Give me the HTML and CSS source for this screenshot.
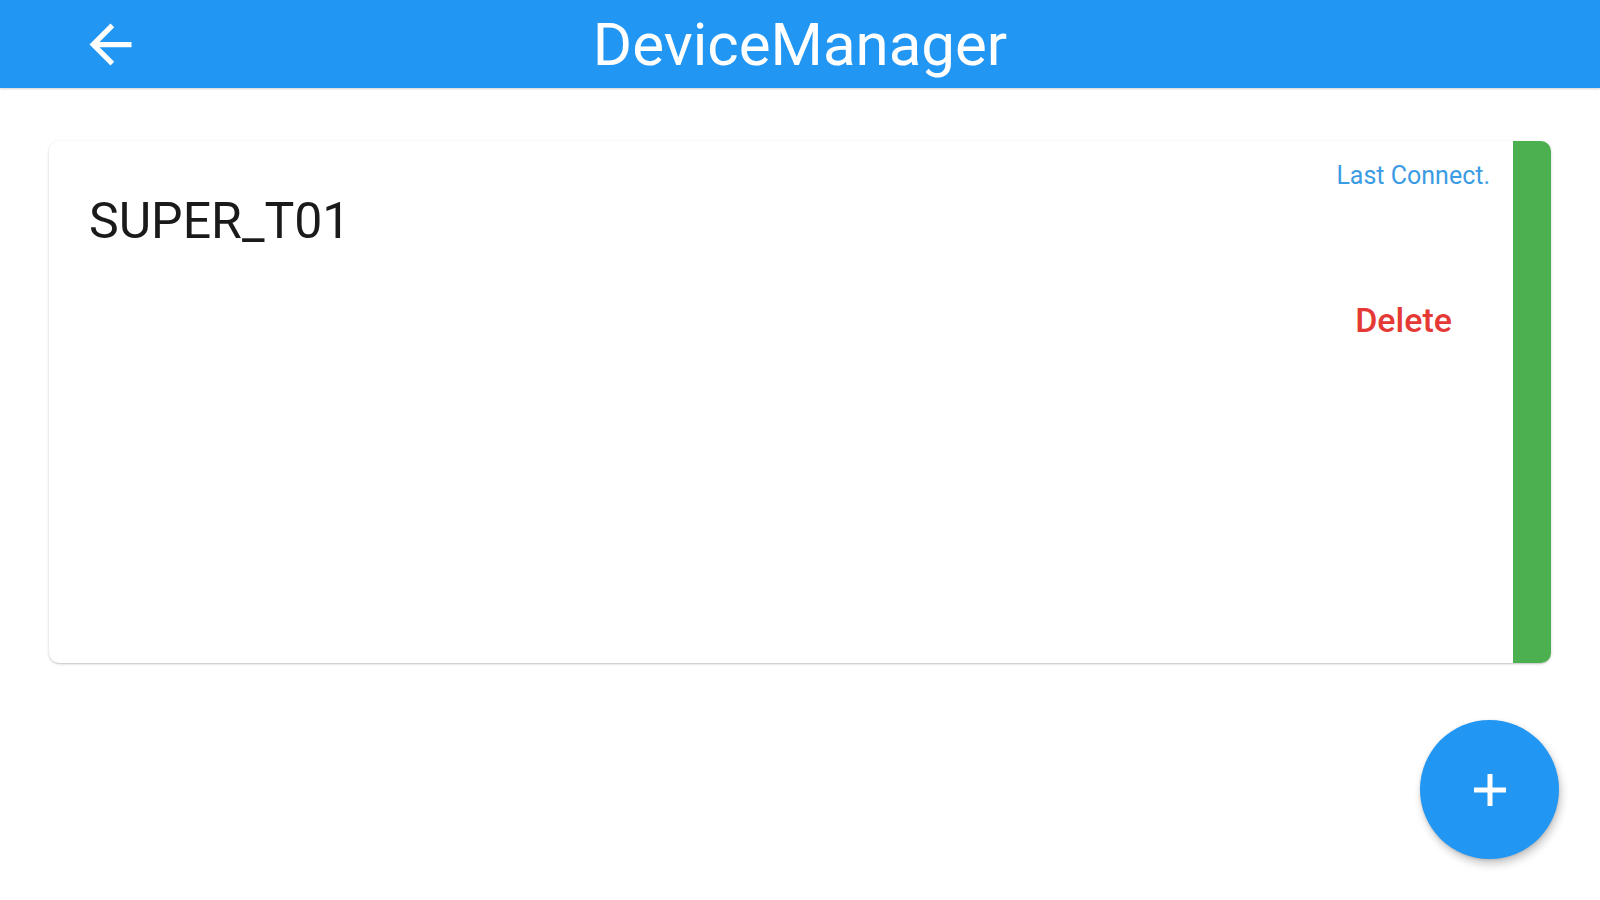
FILE: index.html
```html
<!DOCTYPE html>
<html>
<head>
<meta charset="utf-8">
<title>DeviceManager</title>
<link rel="stylesheet" href="styles.css">
</head>
<body>
<header class="appbar">
  <button class="back-btn" aria-label="Back">
    <svg class="back-icon" viewBox="0 0 24 24"><path d="M20 11H7.83l5.59-5.59L12 4l-8 8 8 8 1.41-1.41L7.83 13H20v-2z" fill="#fff"/></svg>
  </button>
  <h1 class="title">DeviceManager</h1>
</header>
<main class="content">
  <section class="card">
    <div class="card-main">
      <div class="device-name">SUPER_T01</div>
    </div>
    <div class="card-side">
      <div class="last-connect">Last Connect.</div>
      <div class="delete">Delete</div>
    </div>
    <div class="status-bar"></div>
  </section>
</main>
<button class="fab" aria-label="Add">
  <svg class="fab-icon" viewBox="0 0 36 36"><path d="M18 2v32M2 18h32" stroke="#fff" stroke-width="5"/></svg>
</button>
</body>
</html>
```
FILE: styles.css
```css
* { box-sizing: border-box; }
html, body { margin: 0; padding: 0; }
body {
  width: 1600px;
  height: 900px;
  background: #ffffff;
  font-family: Roboto, "Noto Sans", "Liberation Sans", sans-serif;
  overflow: hidden;
  position: relative;
}
.appbar {
  height: 88px;
  background: #2196F3;
  position: relative;
  display: flex;
  align-items: center;
  justify-content: center;
  box-shadow: 0 1px 2px rgba(0,0,0,0.18);
}
.back-btn {
  position: absolute;
  left: 79px;
  top: 13px;
  width: 63px;
  height: 63px;
  padding: 0;
  border: 0;
  background: transparent;
}
.back-icon { width: 63px; height: 63px; display: block; }
.title {
  margin: 0;
  color: #ffffff;
  font-size: 60px;
  font-weight: 400;
  line-height: 1;
  padding-top: 1px;
}
.content {
  padding: 53px 49px 0 49px;
}
.card {
  height: 522px;
  display: flex;
  background: #fff;
  border-radius: 10px;
  box-shadow: 0 1px 3px rgba(0,0,0,0.18), 0 1px 1px rgba(0,0,0,0.08);
}
.card-main {
  flex: 1;
  padding: 55px 0 0 40px;
}
.device-name {
  font-size: 50px;
  line-height: 1;
  color: #1a1a1a;
}
.card-side {
  display: flex;
  flex-direction: column;
  align-items: flex-end;
  padding: 22px 23px 0 0;
}
.last-connect {
  font-size: 25px;
  line-height: 1;
  color: #3b9be3;
}
.delete {
  margin-top: 115px;
  margin-right: 38px;
  font-size: 34px;
  line-height: 1;
  font-weight: 500;
  color: #e53935;
}
.status-bar {
  width: 38px;
  background: #4CAF50;
  border-radius: 0 10px 10px 0;
}
.fab {
  position: absolute;
  right: 41px;
  bottom: 41px;
  width: 139px;
  height: 139px;
  border-radius: 50%;
  border: 0;
  padding: 0;
  background: #2196F3;
  display: flex;
  align-items: center;
  justify-content: center;
  box-shadow: 2px 5px 8px rgba(0,0,0,0.22), 0 1px 3px rgba(0,0,0,0.12);
}
.fab-icon { width: 36px; height: 36px; display: block; }
```
